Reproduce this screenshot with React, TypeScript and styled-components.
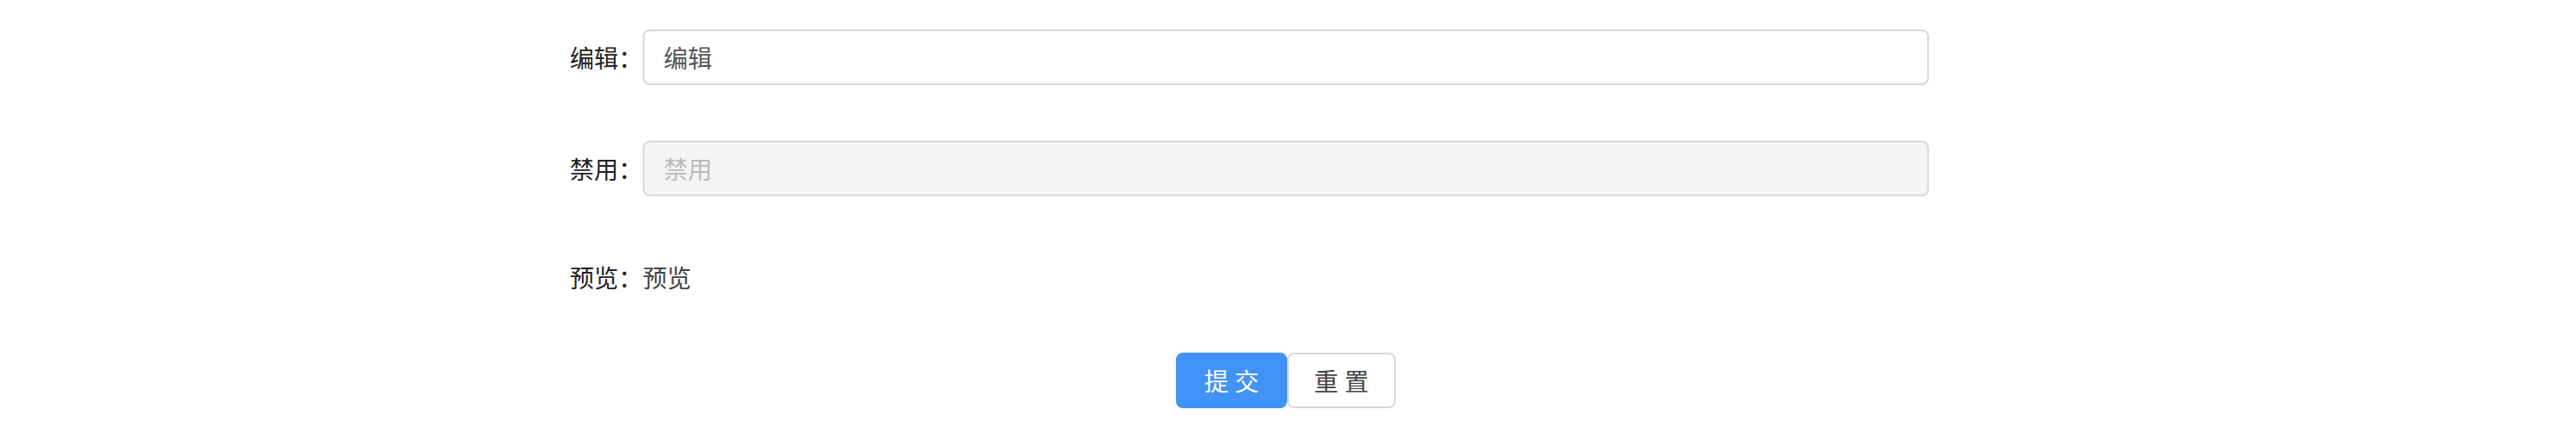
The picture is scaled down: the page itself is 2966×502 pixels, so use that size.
import React from "react";
import styled, { createGlobalStyle } from "styled-components";

const Global = createGlobalStyle`
  html, body { margin: 0; padding: 0; background: #fff; }
  body { font-family: "Noto Sans CJK SC", "Noto Sans", sans-serif; }
`;

const Form = styled.form`
  display: grid;
  grid-template-columns: 1fr 1481px 1fr;
  row-gap: 64px;
  padding-top: 34px;
  padding-right: 5px;
  font-size: 28px;
`;

const Label = styled.label`
  grid-column: 1;
  justify-self: end;
  align-self: center;
  color: #222;
  line-height: 40px;
  white-space: nowrap;
`;

const Field = styled.div<{ $h?: number }>`
  grid-column: 2;
  display: flex;
  align-items: center;
  height: ${(p) => p.$h ?? 64}px;
`;

const Input = styled.input`
  box-sizing: border-box;
  width: 100%;
  height: 64px;
  border: 2px solid #d9d9d9;
  border-radius: 8px;
  padding: 0 22px;
  font: inherit;
  font-size: 28px;
  color: #555;
  background: #fff;
  outline: none;
  &:disabled {
    background: #f4f4f4;
    color: #bbb;
    cursor: not-allowed;
  }
  &::placeholder { color: #bbb; }
`;

const Preview = styled.span`
  color: #444;
  line-height: 40px;
`;

const Actions = styled.div`
  grid-column: 1 / -1;
  display: flex;
  justify-content: center;
  margin-top: -6px;
`;

const Button = styled.button<{ $primary?: boolean }>`
  box-sizing: border-box;
  display: flex;
  align-items: center;
  justify-content: center;
  height: 64px;
  padding: 0 0 0 7px;
  border-radius: 8px;
  font: inherit;
  font-size: 28px;
  letter-spacing: 7px;
  white-space: nowrap;
  cursor: pointer;
  border: 2px solid ${(p) => (p.$primary ? "#4193f8" : "#d9d9d9")};
  background: ${(p) => (p.$primary ? "#4193f8" : "#fff")};
  color: ${(p) => (p.$primary ? "#fff" : "#444")};
  width: ${(p) => (p.$primary ? 128 : 125)}px;
`;

export default function App() {
  return (
    <>
      <Global />
      <Form onSubmit={(e) => e.preventDefault()}>
        <Label>编辑：</Label>
        <Field>
          <Input defaultValue="编辑" />
        </Field>
        <Label>禁用：</Label>
        <Field>
          <Input disabled placeholder="禁用" />
        </Field>
        <Label>预览：</Label>
        <Field $h={58}>
          <Preview>预览</Preview>
        </Field>
        <Actions>
          <Button $primary type="submit">提交</Button>
          <Button type="button">重置</Button>
        </Actions>
      </Form>
    </>
  );
}
